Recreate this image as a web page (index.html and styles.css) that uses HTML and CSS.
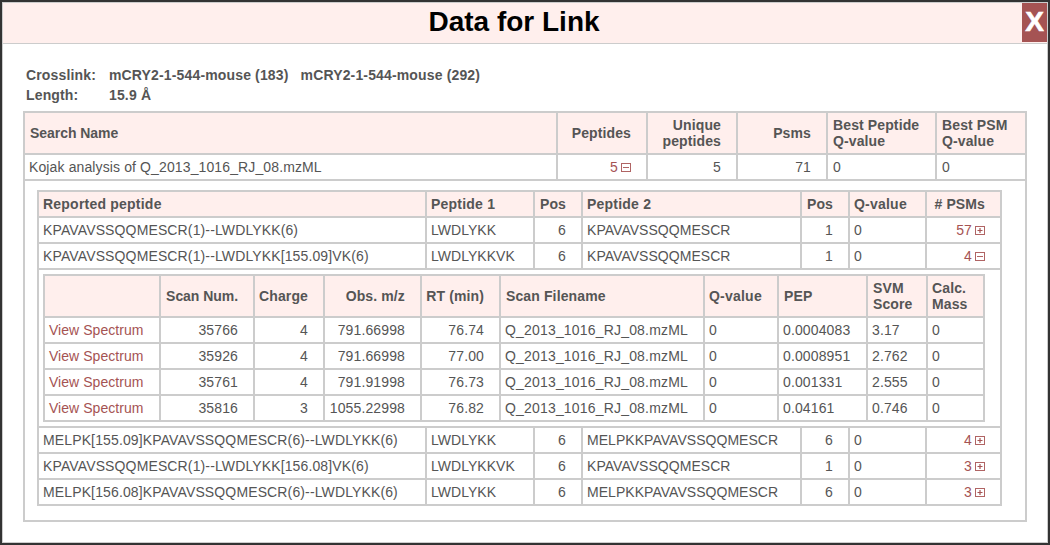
FILE: index.html
```html
<!DOCTYPE html>
<html lang="en">
<head>
<meta charset="utf-8">
<title>Data for Link</title>
<link rel="stylesheet" href="styles.css">
</head>
<body>
<svg width="0" height="0" class="defs">
  <symbol id="plus" viewBox="0 0 10 9"><rect x=".5" y=".5" width="9" height="8" fill="#fff" stroke="#b06464"/><path d="M2.5 4.5h5M5 2v5" stroke="#a55353" stroke-width="1.2" fill="none"/></symbol>
  <symbol id="minus" viewBox="0 0 10 9"><rect x=".5" y=".5" width="9" height="8" fill="#fff" stroke="#b06464"/><path d="M2 4.5h6" stroke="#b06464" fill="none"/></symbol>
</svg>
<div class="modal">
  <header class="modal-header"><h1>Data for Link</h1><button class="close">X</button></header>
  <main class="content">
    <dl class="summary">
      <dt>Crosslink:</dt><dd><span>mCRY2-1-544-mouse (183)</span><span>mCRY2-1-544-mouse (292)</span></dd>
      <dt>Length:</dt><dd>15.9 Å</dd>
    </dl>
    <table class="grid searches">
      <colgroup><col class="w533"><col class="w90"><col class="w90"><col class="w90"><col class="w109"><col class="w90"></colgroup>
      <tr class="tall main"><th class="tight">Search Name</th><th class="num">Peptides</th><th class="num">Unique<br>peptides</th><th class="num">Psms</th><th>Best Peptide<br>Q-value</th><th>Best PSM<br>Q-value</th></tr>
      <tr><td class="name">Kojak analysis of Q_2013_1016_RJ_08.mzML</td><td class="num link">5<svg class="toggle"><use href="#minus"/></svg></td><td class="num">5</td><td class="num">71</td><td class="wide">0</td><td class="wide">0</td></tr>
      <tr><td colspan="6" class="nest-outer">
        <table class="grid peptides">
          <colgroup><col class="w388"><col class="w108"><col class="w48"><col class="w219"><col class="w48"><col class="w77"><col class="w75"></colgroup>
          <tr><th class="loose">Reported peptide</th><th class="loose">Peptide 1</th><th class="num">Pos</th><th class="loose">Peptide 2</th><th class="num">Pos</th><th class="loose">Q-value</th><th class="num">#&nbsp;PSMs</th></tr>
          <tr><td class="seq">KPAVAVSSQQMESCR(1)--LWDLYKK(6)</td><td class="pep">LWDLYKK</td><td class="num">6</td><td class="pep">KPAVAVSSQQMESCR</td><td class="num">1</td><td>0</td><td class="num link">57<svg class="toggle"><use href="#plus"/></svg></td></tr>
          <tr><td class="seq">KPAVAVSSQQMESCR(1)--LWDLYKK[155.09]VK(6)</td><td class="pep">LWDLYKKVK</td><td class="num">6</td><td class="pep">KPAVAVSSQQMESCR</td><td class="num">1</td><td>0</td><td class="num link">4<svg class="toggle"><use href="#minus"/></svg></td></tr>
          <tr><td colspan="7" class="nest-inner">
            <table class="grid psms">
              <colgroup><col class="w116"><col class="w94"><col class="w70"><col class="w97"><col class="w79"><col class="w204"><col class="w74"><col class="w89"><col class="w60"><col class="w57"></colgroup>
              <tr class="tall"><th></th><th class="num tight">Scan Num.</th><th class="num">Charge</th><th class="num">Obs. m/z</th><th class="num">RT (min)</th><th class="wide">Scan Filename</th><th class="loose">Q-value</th><th class="wide">PEP</th><th class="wide">SVM<br>Score</th><th>Calc.<br>Mass</th></tr>
              <tr><td class="link pep">View Spectrum</td><td class="num">35766</td><td class="num">4</td><td class="num">791.66998</td><td class="num">76.74</td><td class="file">Q_2013_1016_RJ_08.mzML</td><td>0</td><td>0.0004083</td><td>3.17</td><td>0</td></tr>
              <tr><td class="link pep">View Spectrum</td><td class="num">35926</td><td class="num">4</td><td class="num">791.66998</td><td class="num">77.00</td><td class="file">Q_2013_1016_RJ_08.mzML</td><td>0</td><td>0.0008951</td><td>2.762</td><td>0</td></tr>
              <tr><td class="link pep">View Spectrum</td><td class="num">35761</td><td class="num">4</td><td class="num">791.91998</td><td class="num">76.73</td><td class="file">Q_2013_1016_RJ_08.mzML</td><td>0</td><td>0.001331</td><td>2.555</td><td>0</td></tr>
              <tr><td class="link pep">View Spectrum</td><td class="num">35816</td><td class="num">3</td><td class="num">1055.22998</td><td class="num">76.82</td><td class="file">Q_2013_1016_RJ_08.mzML</td><td>0</td><td>0.04161</td><td>0.746</td><td>0</td></tr>
            </table>
          </td></tr>
          <tr><td class="seq">MELPK[155.09]KPAVAVSSQQMESCR(6)--LWDLYKK(6)</td><td class="pep">LWDLYKK</td><td class="num">6</td><td class="pep">MELPKKPAVAVSSQQMESCR</td><td class="num">6</td><td>0</td><td class="num link">4<svg class="toggle"><use href="#plus"/></svg></td></tr>
          <tr><td class="seq">KPAVAVSSQQMESCR(1)--LWDLYKK[156.08]VK(6)</td><td class="pep">LWDLYKKVK</td><td class="num">6</td><td class="pep">KPAVAVSSQQMESCR</td><td class="num">1</td><td>0</td><td class="num link">3<svg class="toggle"><use href="#plus"/></svg></td></tr>
          <tr><td class="seq">MELPK[156.08]KPAVAVSSQQMESCR(6)--LWDLYKK(6)</td><td class="pep">LWDLYKK</td><td class="num">6</td><td class="pep">MELPKKPAVAVSSQQMESCR</td><td class="num">6</td><td>0</td><td class="num link">3<svg class="toggle"><use href="#plus"/></svg></td></tr>
        </table>
      </td></tr>
    </table>
  </main>
</div>
</body>
</html>
```

FILE: styles.css
```css
* { box-sizing: border-box; }
body {
  margin: 0;
  height: 545px;
  padding: 2px;
  overflow: hidden;
  background: #333;
  color: #555;
  font: 14px/16px Arial, "Liberation Sans", sans-serif;
}
.defs { display: none; }
.modal {
  width: 1046px;
  height: 541px;
  border: 1px solid #ccc;
  background: #fff;
}
.modal-header {
  display: flex;
  height: 41px;
  border-bottom: 1px solid #ccc;
  background: #ffefed;
}
h1 {
  flex: 1;
  margin: 0;
  padding-left: 3px;
  color: #000;
  font-size: 28px;
  line-height: 37px;
  text-align: center;
}
.close {
  width: 25px;
  height: 39px;
  padding: 0 0 2px;
  border: 0;
  background: #a55353;
  color: #fff;
  font: bold 28px/36px Arial, "Liberation Sans", sans-serif;
  -webkit-text-stroke: .6px #fff;
}
.content { padding: 20px 20px 0; }
.summary {
  display: grid;
  grid-template-columns: 83px 1fr;
  grid-auto-rows: 20px;
  margin: 0 0 6px;
  padding: 1px 0 0 3px;
  font-weight: bold;
  line-height: 20px;
  letter-spacing: .15px;
}
.summary dd { display: flex; gap: 12px; margin: 0; }
.grid {
  table-layout: fixed;
  border-collapse: collapse;
}
.searches { width: 1004px; }
.peptides { width: 965px; }
.psms { width: 942px; }
.grid tr { height: 26px; }
.grid tr.tall { height: 42px; }
.grid th, .grid td {
  padding: 0 0 0 4px;
  border: 2px solid #ccc;
  text-align: left;
  vertical-align: middle;
  white-space: nowrap;
  letter-spacing: .13px;
}
.grid th { background: #ffefed; letter-spacing: .12px; }
.grid th.tight { letter-spacing: -.05px; }
.grid th.loose { letter-spacing: .22px; }
.grid .main th, .grid .wide { padding-left: 5px; }
.grid td.pep { letter-spacing: .04px; }
.grid td.name { letter-spacing: .12px; }
.grid td.file { letter-spacing: .18px; }
.grid .num, .grid .main .num { padding: 0 15px 0 0; text-align: right; }
.grid .nest-outer { padding: 9px 0 14px 12px; }
.grid .nest-inner { padding: 4px 0; padding-left: 4px; }
.link { color: #a55353; }
.toggle { width: 10px; height: 9px; margin-left: 3px; vertical-align: 0; }
.w533 { width: 533px; } .w90 { width: 90px; } .w109 { width: 109px; }
.w388 { width: 388px; } .w108 { width: 108px; } .w48 { width: 48px; }
.w219 { width: 219px; } .w77 { width: 77px; } .w75 { width: 75px; }
.w116 { width: 116px; } .w94 { width: 94px; } .w70 { width: 70px; }
.w97 { width: 97px; } .w79 { width: 79px; } .w204 { width: 204px; }
.w74 { width: 74px; } .w89 { width: 89px; } .w60 { width: 60px; } .w57 { width: 57px; }
```
